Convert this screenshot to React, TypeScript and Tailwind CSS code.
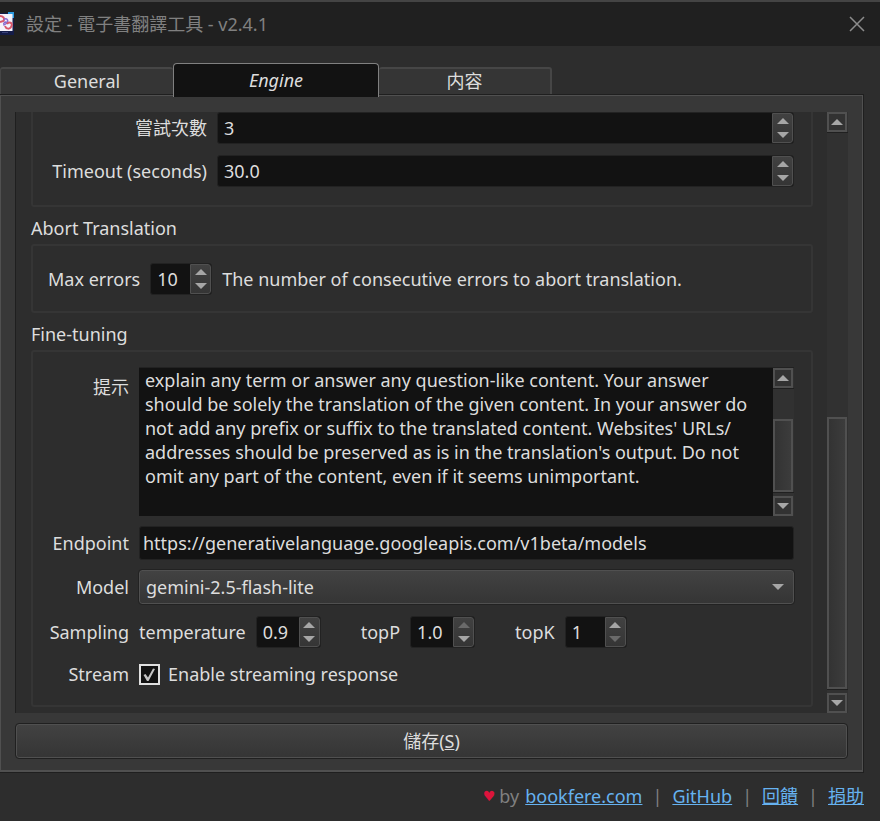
import { useState } from "react";
import type { ReactNode } from "react";

const PROMPT = `explain any term or answer any question-like content. Your answer
should be solely the translation of the given content. In your answer do
not add any prefix or suffix to the translated content. Websites' URLs/
addresses should be preserved as is in the translation's output. Do not
omit any part of the content, even if it seems unimportant.`;

const Arrow = ({ down = false, dim = false }: { down?: boolean; dim?: boolean }) => (
    <svg viewBox="0 0 12 6" className={dim ? "h-[6px] w-[12px] text-[#6a6a6a]" : "h-[6px] w-[12px] text-[#a6a6a6]"}>
        <path d={down ? "M0 0H12L6 6Z" : "M0 6H12L6 0Z"} fill="currentColor" />
    </svg>
);

type SpinProps = {
    id: string;
    start: number;
    min: number;
    max: number;
    step?: number;
    digits?: number;
    className: string;
};

const SpinBox = ({ id, start, min, max, step = 1, digits = 0, className }: SpinProps) => {
    const [text, setText] = useState(start.toFixed(digits));
    const value = Number(text);

    const move = (delta: number) => {
        const next = Math.min(max, Math.max(min, value + delta));
        setText(next.toFixed(digits));
    };

    return (
        <div className={`flex h-8 rounded-[3px] border border-[#222222] bg-[#121212] ${className}`}>
            <input id={id} inputMode="decimal" value={text} onChange={(e) => setText(e.target.value)} className="w-0 min-w-0 flex-1 bg-transparent pl-1.5 outline-none" />
            <div className="flex w-[21px] flex-col items-center justify-between rounded-r-[3px] border border-[#505050] bg-linear-to-b from-[#414141] to-[#353535] py-1">
                <button type="button" aria-label="Increase" onClick={() => move(step)}><Arrow dim={value >= max} /></button>
                <button type="button" aria-label="Decrease" onClick={() => move(-step)}><Arrow down dim={value <= min} /></button>
            </div>
        </div>
    );
};

const ScrollBar = ({ spacer, thumb }: { spacer: string; thumb: string }) => (
    <div className="flex w-[21px] shrink-0 flex-col bg-[#313131]">
        <button type="button" aria-label="Scroll up" className="flex h-5 w-5 shrink-0 items-center justify-center border-2 border-[#505050] bg-[#323232]"><Arrow /></button>
        <div className={`border-t border-[#202020] ${spacer}`}></div>
        <div className={`w-5 border-2 border-[#505050] bg-linear-to-r from-[#333333] to-[#3c3c3c] ${thumb}`}></div>
        <div className="h-1 shrink-0 border-t border-[#202020]"></div>
        <button type="button" aria-label="Scroll down" className="flex h-5 w-5 shrink-0 items-center justify-center border-2 border-[#505050] bg-[#323232]"><Arrow down /></button>
    </div>
);

const RowLabel = ({ htmlFor, children }: { htmlFor?: string; children: ReactNode }) => (
    <label htmlFor={htmlFor} className="self-center text-right whitespace-nowrap">{children}</label>
);

const AppIcon = () => (
    <svg viewBox="0 0 14 24" className="h-6 w-3.5 shrink-0">
        <path d="M0 1H14V23H0Z" fill="#141c48" />
        <path d="M8 0H14V6H12V3H8Z" fill="#2b9ae0" />
        <path d="M0 2H12.5V19H0Z" fill="#f4f2fb" />
        <path d="M0 4C3 4 5 6 3.5 9L0 10" fill="none" stroke="#d9576b" strokeWidth="2" />
        <path d="M4 8C6 5 9 8 7 11L4 13C3 11 5 9 7 11" fill="none" stroke="#8a6bd0" strokeWidth="1.5" />
        <path d="M7 12C9 9 13 11 11.5 14C10 18 6 17 5 14" fill="none" stroke="#d9576b" strokeWidth="2" />
        <path d="M2 20.5H8" stroke="#39427a" strokeWidth="1" />
    </svg>
);

const App = () => {
    const [prompt, setPrompt] = useState(PROMPT);
    const [endpoint, setEndpoint] = useState("https://generativelanguage.googleapis.com/v1beta/models");
    const [stream, setStream] = useState(true);

    return (
        <div className="flex min-h-screen flex-col bg-[#2d2d2d] font-['Noto_Sans','Noto_Sans_CJK_TC',sans-serif] text-[18px] leading-6 text-[#dddddd]">
            <header className="flex h-[46px] items-center border-t-2 border-[#444444] bg-[#202020] text-[#808080]">
                <AppIcon />
                <h1 className="ml-3 flex-1">設定 - 電子書翻譯工具 - v2.4.1</h1>
                <button type="button" aria-label="Close" className="mr-[14px]">
                    <svg viewBox="0 0 18 18" className="size-[18px]"><path d="M2 2L16 16M16 2L2 16" stroke="#8c8c8c" strokeWidth="1.5" fill="none" /></svg>
                </button>
            </header>

            <div role="tablist" className="mt-[17px] flex h-8 items-end">
                <button type="button" role="tab" className="h-7 w-[173px] rounded-t-[3px] border-t-2 border-l border-[#464646] bg-[#353535] pb-0.5">General</button>
                <button type="button" role="tab" aria-selected="true" className="relative z-10 -mb-0.5 h-[34px] w-[206px] rounded-t-[4px] border border-b-0 border-[#808080] bg-[#121212] pb-0.5 italic">Engine</button>
                <button type="button" role="tab" className="h-7 w-[173px] rounded-t-[3px] border-t-2 border-r-2 border-[#464646] bg-[#353535] pb-0.5">内容</button>
            </div>

            <main className="mr-[17px] border border-b-2 border-[#505050] bg-[#383838] px-[14px] pt-4 pb-3 outline outline-[#1f1f1f]">
                <div className="flex border-l border-[#1f1f1f] bg-[#2d2d2d]">
                    <div className="min-w-0 flex-1 pr-[14px] pb-1.5 pl-[15px]">
                        <div className="grid grid-cols-[159px_1fr] gap-x-2.5 gap-y-[11px] rounded-b-[3px] border-2 border-t-0 border-[#353535] pr-[17px] pb-[18px] pl-[15px]">
                            <RowLabel htmlFor="attempts">嘗試次數</RowLabel>
                            <SpinBox id="attempts" start={3} min={0} max={100} className="w-full" />
                            <RowLabel htmlFor="timeout">Timeout (seconds)</RowLabel>
                            <SpinBox id="timeout" start={30} min={0} max={1000} digits={1} className="w-full" />
                        </div>

                        <h2 className="mt-[9px] mb-1">Abort Translation</h2>
                        <div className="flex h-[69px] items-center rounded-[3px] border-2 border-[#353535] px-[15px]">
                            <label htmlFor="errors">Max errors</label>
                            <SpinBox id="errors" start={10} min={0} max={100} className="mx-2.5 w-[62px]" />
                            <p>The number of consecutive errors to abort translation.</p>
                        </div>

                        <h2 className="mt-[9px] mb-1">Fine-tuning</h2>
                        <div className="grid grid-cols-[81px_1fr] gap-2.5 rounded-[3px] border-2 border-[#353535] px-[15px] pt-[15px] pr-[17px] pb-[17px]">
                            <label htmlFor="prompt" className="mt-2 text-right">提示</label>
                            <div className="flex h-[149px] border-t border-[#222222] bg-[#121212]">
                                <textarea id="prompt" value={prompt} onChange={(e) => setPrompt(e.target.value)} className="min-w-0 flex-1 resize-none overflow-hidden pl-1.5 whitespace-pre outline-none" />
                                <ScrollBar spacer="h-[31px]" thumb="flex-1" />
                            </div>

                            <RowLabel htmlFor="endpoint">Endpoint</RowLabel>
                            <input id="endpoint" value={endpoint} onChange={(e) => setEndpoint(e.target.value)} className="h-[34px] w-full rounded-[3px] border border-[#222222] bg-[#121212] px-[3px] outline-none" />

                            <RowLabel htmlFor="model">Model</RowLabel>
                            <div className="relative">
                                <select id="model" className="h-[34px] w-full appearance-none rounded-[3px] border border-[#505050] bg-linear-to-b from-[#424242] to-[#353535] px-1.5 outline outline-[#222222]">
                                    <option>gemini-2.5-flash-lite</option>
                                </select>
                                <span className="pointer-events-none absolute inset-y-0 right-2.5 flex items-center"><Arrow down /></span>
                            </div>

                            <RowLabel htmlFor="temperature">Sampling</RowLabel>
                            <div className="flex h-9 items-center">
                                <label htmlFor="temperature">temperature</label>
                                <SpinBox id="temperature" start={0.9} min={0} max={1} step={0.1} digits={1} className="ml-2.5 w-[65px]" />
                                <label htmlFor="topp" className="ml-10">topP</label>
                                <SpinBox id="topp" start={1} min={0} max={1} step={0.1} digits={1} className="ml-2.5 w-[65px]" />
                                <label htmlFor="topk" className="ml-10">topK</label>
                                <SpinBox id="topk" start={1} min={1} max={40} className="ml-2.5 w-[62px]" />
                            </div>

                            <RowLabel htmlFor="stream">Stream</RowLabel>
                            <div className="relative flex h-7 items-center gap-2">
                                <input id="stream" type="checkbox" checked={stream} onChange={(e) => setStream(e.target.checked)} className="peer size-[21px] appearance-none border-2 border-[#e0e0e0] bg-[#121212]" />
                                <svg viewBox="0 0 21 21" className="pointer-events-none absolute left-0 hidden size-[21px] peer-checked:block">
                                    <path d="M4.5 11L6.5 10L9 13.5L14 4.5L16 5L9.5 17H8Z" fill="#c4c4c4" />
                                </svg>
                                <label htmlFor="stream">Enable streaming response</label>
                            </div>
                        </div>
                    </div>
                    <ScrollBar spacer="flex-1" thumb="h-[272px]" />
                </div>

                <div className="mt-[11px] px-px">
                    <button type="button" className="h-[34px] w-full rounded-[3px] border border-[#505050] bg-linear-to-b from-[#424242] to-[#353535] outline outline-[#202020]">
                        儲存(<span className="underline">S</span>)
                    </button>
                </div>
            </main>

            <footer className="mt-3 mr-4 flex items-center justify-end text-[#808080]">
                <span className="mr-1 font-['DejaVu_Sans'] text-[14px] text-[#dc143c]">♥</span>
                <span className="mr-1.5">by</span>
                <a href="#bookfere" className="text-[#66b2f0] underline">bookfere.com</a>
                <span className="mx-2.5">|</span>
                <a href="#github" className="text-[#66b2f0] underline">GitHub</a>
                <span className="mx-2.5">|</span>
                <a href="#feedback" className="text-[#66b2f0] underline">回饋</a>
                <span className="mx-2.5">|</span>
                <a href="#donate" className="text-[#66b2f0] underline">捐助</a>
            </footer>
        </div>
    );
};

export default App;
